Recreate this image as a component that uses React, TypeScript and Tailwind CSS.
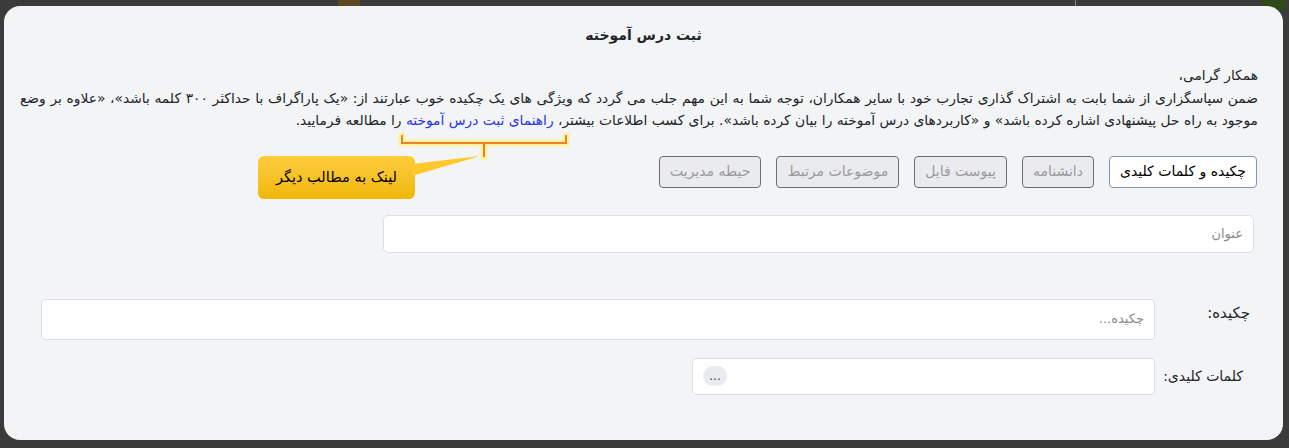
export default function App() {
  const tabs = [
    { label: "چکیده و کلمات کلیدی", active: true },
    { label: "دانشنامه" },
    { label: "پیوست فایل" },
    { label: "موضوعات مرتبط" },
    { label: "حیطه مدیریت" },
  ];
  return (
    <div className="relative w-[1289px] h-[448px] overflow-hidden bg-[#3b3b3b] pt-[6px] pl-[4px] font-['DejaVu_Sans',sans-serif] text-[#212529]">
      {/* faint background hints */}
      <div className="absolute left-[1262px] top-0 h-[10px] w-[24px] rounded-bl-[12px] bg-[#2f4a17]" />
      <div className="absolute left-[338px] top-0 h-[6px] w-[22px] bg-[#5a4a22]" />
      <div className="absolute left-[1075px] top-0 h-[6px] w-[1px] bg-[#888]" />

      <div dir="rtl" className="relative w-[1279px] h-[434px] rounded-[16px] bg-[#f3f4f6]">
        <div className="pt-[20px] text-center text-[14px] leading-[18px] font-bold">ثبت درس آموخته</div>

        <div className="mt-[20px] pr-[25px] pl-[16px] text-[13.8px] leading-[22.5px]">
          <div>همکار گرامی،</div>
          <div className="text-justify [text-align-last:justify] whitespace-nowrap">
            ضمن سپاسگزاری از شما بابت به اشتراک گذاری تجارب خود با سایر همکاران، توجه شما به این مهم جلب می گردد که ویژگی های یک چکیده خوب عبارتند از: «یک پاراگراف با حداکثر ۳۰۰ کلمه باشد»، «علاوه بر وضع
          </div>
          <div className="whitespace-nowrap">
            موجود به راه حل پیشنهادی اشاره کرده باشد» و «کاربردهای درس آموخته را بیان کرده باشد». برای کسب اطلاعات بیشتر، <span className="text-[#2b35e8]">راهنمای ثبت درس آموخته</span> را مطالعه فرمایید.
          </div>
        </div>

        <div className="mt-[24px] flex gap-[15px] pr-[26px]">
          {tabs.map((t) =>
            t.active ? (
              <div key={t.label} className="h-[32px] flex items-center px-[10px] rounded-[4px] border border-[#7e97c0] bg-white text-[14px] text-black">
                {t.label}
              </div>
            ) : (
              <div key={t.label} className="h-[32px] flex items-center px-[10px] rounded-[4px] border border-[#6b6f73] bg-[#e9ebee] text-[14px] text-[#9a9a9a]">
                {t.label}
              </div>
            )
          )}
        </div>

        <div className="mt-[27px] pr-[29px]">
          <div className="w-[871px] h-[38px] flex items-center px-[10px] rounded-[5px] border border-[#dcdfe3] bg-white text-[13px] text-[#8a8a8a]">
            عنوان
          </div>
        </div>

        <div className="mt-[46px] flex items-start">
          <div className="w-[128px] pr-[33px] pt-[3px] text-[15px] leading-[22px]">چکیده:</div>
          <div className="w-[1114px] h-[41px] flex items-center px-[10px] rounded-[4px] border border-[#dcdfe3] bg-white text-[13px] text-[#8a8a8a]">
            چکیده...
          </div>
        </div>

        <div className="mt-[18px] flex items-center">
          <div className="w-[128px] pr-[40px] text-[14px]">کلمات کلیدی:</div>
          <div className="w-[463px] h-[37px] flex items-center px-[10px] rounded-[5px] border border-[#dcdfe3] bg-white">
            <div className="mr-auto h-[20px] w-[24px] rounded-full bg-[#e9ebef] flex items-center justify-center text-[12px] leading-none text-[#444]">...</div>
          </div>
        </div>

        {/* annotation bracket */}
        <svg className="absolute left-[390px] top-[126px]" width="184" height="30" viewBox="0 0 184 30">
          <g stroke="#fff27a" strokeWidth="7" strokeLinecap="round" fill="none" opacity="0.7">
            <path d="M8 4 V11 H172 V4 M90 11 V25" />
          </g>
          <g stroke="#ef7f2f" strokeWidth="2" fill="none">
            <path d="M8 3 V11 H172 V3 M90 11 V25" />
          </g>
        </svg>

        {/* callout */}
        <div className="absolute left-[254px] top-[150px] w-[157px] h-[43px] rounded-[6px] bg-gradient-to-b from-[#ffcd3c] to-[#efb700] flex items-center justify-center text-[14.5px] text-black">
          لینک به مطالب دیگر
        </div>
        <svg className="absolute left-[408px] top-[149px]" width="72" height="30" viewBox="0 0 72 30">
          <path d="M0 9 L68 1 L0 21 Z" fill="#ffc92e" />
        </svg>
      </div>
    </div>
  );
}
